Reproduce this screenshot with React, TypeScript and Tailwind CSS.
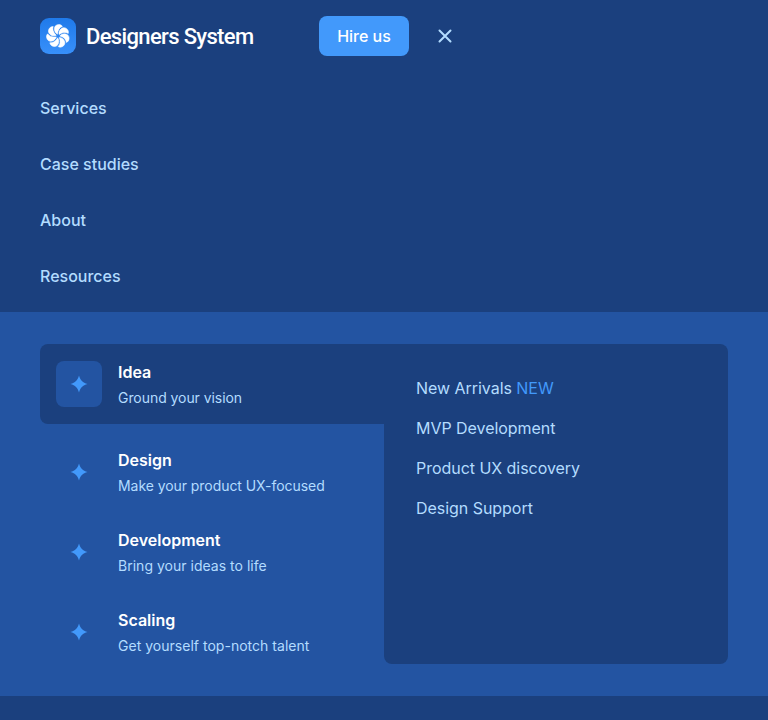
const services = [
  { title: 'Idea', text: 'Ground your vision' },
  { title: 'Design', text: 'Make your product UX-focused' },
  { title: 'Development', text: 'Bring your ideas to life' },
  { title: 'Scaling', text: 'Get yourself top-notch talent' },
];

const links = ['MVP Development', 'Product UX discovery', 'Design Support'];

const petalAngles = [0, 51.43, 102.86, 154.29, 205.71, 257.14, 308.57];

function Logo() {
  return (
    <svg width="36" height="36" viewBox="0 0 36 36" className="block">
      <defs>
        <linearGradient id="tile" x1="0" y1="0" x2="0" y2="1">
          <stop offset="0" stopColor="#1f7aea" />
          <stop offset="1" stopColor="#3890fa" />
        </linearGradient>
      </defs>
      <rect width="36" height="36" rx="9" fill="url(#tile)" />
      <g transform="translate(18 18)">
        {petalAngles.map((a) => (
          <path
            key={a}
            d="M-.5 -1.8C-3.2 -3.2 -4.2 -6.2 -3.4 -8.8C-2.2 -12 2.8 -12.4 4.4 -9.6C1.6 -8.6 -.2 -6 -.5 -1.8Z"
            fill="#fff"
            stroke="#fff"
            strokeWidth="0.5"
            strokeLinejoin="round"
            transform={`rotate(${a})`}
          />
        ))}
      </g>
    </svg>
  );
}

function Sparkle() {
  return (
    <svg width="18" height="18" viewBox="0 0 16 16" fill="#4299fb">
      <path d="M8 .4C9.3 4.8 11.2 6.7 15.6 8C11.2 9.3 9.3 11.2 8 15.6C6.7 11.2 4.8 9.3 .4 8C4.8 6.7 6.7 4.8 8 .4Z" />
    </svg>
  );
}

export default function App() {
  return (
    <div className="h-[720px] w-[768px] overflow-hidden bg-[#1b407e] font-['Inter',sans-serif] text-[#b3dcff]">
      <header className="flex h-[72px] items-center pl-10">
        <Logo />
        <span className="ml-[10px] w-[233px] whitespace-nowrap pt-0.5 font-['Roboto',sans-serif] text-[22px] font-medium leading-7 tracking-[-0.65px] text-white">
          Designers System
        </span>
        <button className="h-10 w-[90px] rounded-lg bg-[#4299fb] text-base font-medium text-white">Hire us</button>
        <svg width="14" height="14" viewBox="0 0 14 14" className="ml-[29px]" stroke="#b3dcff" strokeWidth="2" strokeLinecap="round">
          <path d="M1.5 1.5L12.5 12.5M12.5 1.5L1.5 12.5" />
        </svg>
      </header>
      <nav className="flex h-60 flex-col pl-10 pt-2 text-base font-medium">
        <a className="flex h-14 items-center">Services</a>
        <a className="flex h-14 items-center">Case studies</a>
        <a className="flex h-14 items-center">About</a>
        <a className="flex h-14 items-center">Resources</a>
      </nav>
      <section className="flex h-96 bg-[#2354a2] px-10 py-8">
        <div className="w-[344px]">
          {services.map((s, i) => (
            <div
              key={s.title}
              className={i === 0 ? 'mb-2 flex h-20 rounded-l-lg bg-[#1b407e] pl-4 pt-[17px]' : 'flex h-20 pl-4 pt-[17px]'}
            >
              <div
                className={
                  i === 0
                    ? 'flex size-[46px] items-center justify-center rounded-lg bg-[#2354a2]'
                    : 'flex size-[46px] items-center justify-center'
                }
              >
                <Sparkle />
              </div>
              <div className="ml-4">
                <div className="-mt-px text-base font-semibold leading-6 text-white">{s.title}</div>
                <div
                  className={
                    i < 2
                      ? 'mt-[3px] text-sm leading-[22px] tracking-[-0.06px]'
                      : 'mt-[3px] text-sm leading-[22px] tracking-[0.02px]'
                  }
                >
                  {s.text}
                </div>
              </div>
            </div>
          ))}
        </div>
        <div className="flex w-[344px] flex-col rounded-r-lg rounded-bl-lg bg-[#1b407e] pl-8 pt-6 text-base tracking-[-0.04px]">
          <a className="h-10 leading-10">
            New Arrivals <span className="text-[#4299fb]">NEW</span>
          </a>
          {links.map((l) => (
            <a key={l} className="h-10 leading-10">
              {l}
            </a>
          ))}
        </div>
      </section>
    </div>
  );
}
